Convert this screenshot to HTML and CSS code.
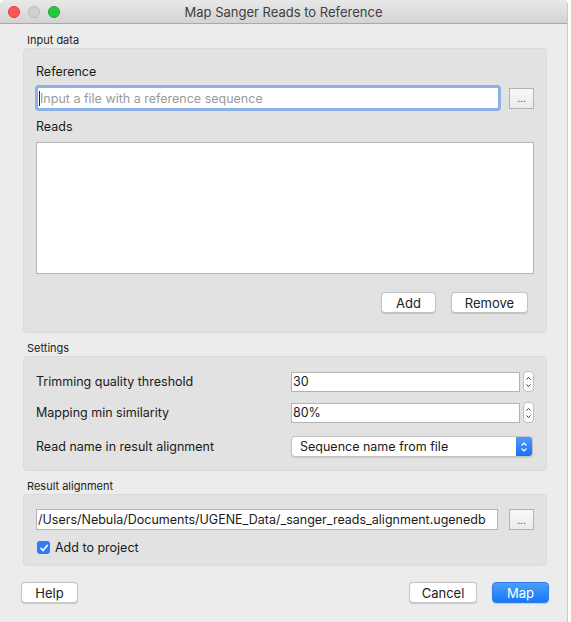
FILE: index.html
```html
<!DOCTYPE html>
<html>
<head>
<meta charset="utf-8">
<link rel="stylesheet" href="styles.css">
</head>
<body>
<div class="window">
  <div class="titlebar">
    <div class="lights">
      <span class="light red"></span>
      <span class="light gray"></span>
      <span class="light green"></span>
    </div>
    <div class="title">Map Sanger Reads to Reference</div>
  </div>
  <div class="content">
    <div class="section-label">Input data</div>
    <div class="group group-input">
      <div class="field-label">Reference</div>
      <div class="row">
        <div class="text-input focused"><span class="caret"></span><span class="placeholder">Input a file with a reference sequence</span></div>
        <div class="dots-btn">...</div>
      </div>
      <div class="field-label reads-label">Reads</div>
      <div class="list"></div>
      <div class="list-buttons">
        <div class="btn btn-add">Add</div>
        <div class="btn btn-remove">Remove</div>
      </div>
    </div>

    <div class="section-label">Settings</div>
    <div class="group group-settings">
      <div class="setting-row">
        <div class="setting-label">Trimming quality threshold</div>
        <div class="spin">
          <div class="spin-input">30</div>
          <div class="stepper"><svg width="11" height="20" viewBox="0 0 11 20"><path d="M3.5 7.5 L5.5 5.5 L7.5 7.5" fill="none" stroke="#333" stroke-width="1"/><path d="M3.5 12.5 L5.5 14.5 L7.5 12.5" fill="none" stroke="#333" stroke-width="1"/></svg></div>
        </div>
      </div>
      <div class="setting-row">
        <div class="setting-label">Mapping min similarity</div>
        <div class="spin">
          <div class="spin-input">80%</div>
          <div class="stepper"><svg width="11" height="20" viewBox="0 0 11 20"><path d="M3.5 7.5 L5.5 5.5 L7.5 7.5" fill="none" stroke="#333" stroke-width="1"/><path d="M3.5 12.5 L5.5 14.5 L7.5 12.5" fill="none" stroke="#333" stroke-width="1"/></svg></div>
        </div>
      </div>
      <div class="setting-row combo-row">
        <div class="setting-label">Read name in result alignment</div>
        <div class="combo">
          <div class="combo-text">Sequence name from file</div>
          <div class="combo-arrow"><svg width="16" height="20" viewBox="0 0 16 20"><path d="M5.5 8.5 L8 6 L10.5 8.5" fill="none" stroke="#fff" stroke-width="1.2"/><path d="M5.5 11.5 L8 14 L10.5 11.5" fill="none" stroke="#fff" stroke-width="1.2"/></svg></div>
        </div>
      </div>
    </div>

    <div class="section-label">Result alignment</div>
    <div class="group group-result">
      <div class="row">
        <div class="text-input path">/Users/Nebula/Documents/UGENE_Data/_sanger_reads_alignment.ugenedb</div>
        <div class="dots-btn small">...</div>
      </div>
      <div class="check-row">
        <span class="checkbox"><svg width="12" height="12" viewBox="0 0 12 12"><path d="M3 6.3 L5.1 8.6 L9.2 3.4" fill="none" stroke="#fff" stroke-width="1.6" stroke-linecap="round" stroke-linejoin="round"/></svg></span>
        <span>Add to project</span>
      </div>
    </div>

    <div class="footer">
      <div class="btn btn-help">Help</div>
      <div class="footer-right">
        <div class="btn btn-cancel">Cancel</div>
        <div class="btn btn-map">Map</div>
      </div>
    </div>
  </div>
</div>
</body>
</html>
```
FILE: styles.css
```css
html, body {
  margin: 0;
  padding: 0;
  background: #ffffff;
}
body {
  font-family: Inter, "Liberation Sans", sans-serif;
  font-size: 12.5px;
  color: #1a1a1a;
}
.window {
  width: 568px;
  height: 622px;
  background: #ececec;
  border-right: 1px solid #c8c8c8;
  border-radius: 5px 5px 0 0;
  box-sizing: border-box;
  overflow: hidden;
}
.titlebar {
  height: 23px;
  background: linear-gradient(#e8e8e8, #d3d3d3);
  border-bottom: 1px solid #a9a9a9;
  display: flex;
  align-items: center;
  position: relative;
}
.lights {
  display: flex;
  gap: 8px;
  padding-left: 8px;
}
.light {
  width: 12px;
  height: 12px;
  border-radius: 50%;
  box-sizing: border-box;
}
.light.red { background: #fc5753; border: 0.5px solid #df3d37; }
.light.gray { background: #d0d0d0; border: 0.5px solid #bcbcbc; }
.light.green { background: #28c840; border: 0.5px solid #1da631; }
.title {
  position: absolute;
  left: 0;
  right: 0;
  text-align: center;
  font-size: 13px;
  color: #404040;
  top: 4px;
}
.content {
  padding: 8px 20px 0 23px;
}
.section-label {
  font-size: 11px;
  padding-left: 4px;
  height: 16px;
  line-height: 16px;
  color: #222;
}
.group {
  background: #e2e2e2;
  border: 1px solid #dadada;
  border-radius: 4px;
  box-sizing: border-box;
  padding: 0 12px 0 12px;
}
.group-input {
  height: 285px;
  margin-bottom: 7px;
  padding-top: 14px;
}
.field-label {
  height: 18px;
  line-height: 18px;
}
.row {
  display: flex;
  align-items: center;
  gap: 10px;
}
.group-input .row {
  margin-top: 6px;
}
.text-input {
  flex: 1;
  height: 22px;
  background: #fff;
  box-sizing: border-box;
  border: 1px solid #b9b9b9;
  display: flex;
  align-items: center;
  padding-left: 2px;
  white-space: nowrap;
  overflow: hidden;
}
.text-input.focused {
  border: 1px solid #8db0e8;
  box-shadow: 0 0 0 2px #8db0e8;
  border-radius: 2px;
  margin-left: 1px;
  padding-left: 1px;
}
.caret {
  width: 1px;
  height: 15px;
  background: #222;
}
.placeholder {
  color: #9b9b9b;
}
.dots-btn {
  width: 25px;
  height: 21px;
  box-sizing: border-box;
  border: 1px solid #b2b2b2;
  background: linear-gradient(#f8f8f8, #ebebeb);
  font-size: 10px;
  display: flex;
  align-items: center;
  justify-content: center;
  color: #333;
  line-height: 1;
}
.reads-label {
  margin-top: 9px;
}
.list {
  margin-top: 6px;
  height: 132px;
  background: #fff;
  border: 1px solid #b4b4b4;
  box-sizing: border-box;
}
.list-buttons {
  display: flex;
  justify-content: flex-end;
  gap: 15px;
  margin-top: 18px;
  padding-right: 6px;
}
.btn {
  height: 21px;
  box-sizing: border-box;
  background: #fff;
  border: 1px solid #c4c4c4;
  border-radius: 4px;
  box-shadow: 0 0.5px 1px rgba(0,0,0,0.15);
  display: flex;
  align-items: center;
  justify-content: center;
  font-size: 13px;
  color: #222;
}
.btn-add { width: 55px; }
.btn-remove { width: 77px; }
.group-settings {
  height: 115px;
  padding-top: 14px;
  margin-bottom: 7px;
  padding-right: 12px;
}
.setting-row {
  display: flex;
  align-items: center;
  justify-content: space-between;
  height: 21px;
  margin-bottom: 10px;
}
.spin {
  display: flex;
  align-items: center;
  gap: 3px;
}
.spin-input {
  width: 229px;
  height: 20px;
  box-sizing: border-box;
  border: 1px solid #b4b4b4;
  background: #fff;
  padding-left: 1px;
  display: flex;
  align-items: center;
}
.stepper {
  width: 11px;
  height: 21px;
  box-sizing: border-box;
  background: #fff;
  border: 1px solid #c0c0c0;
  border-radius: 4px;
  display: flex;
  align-items: center;
  justify-content: center;
  overflow: hidden;
}
.stepper svg { flex: none; }
.combo-row {
  margin-top: 13px;
}
.combo {
  width: 242px;
  height: 21px;
  box-sizing: border-box;
  border: 1px solid #c4c4c4;
  border-radius: 4px;
  background: #fff;
  display: flex;
  overflow: hidden;
  box-shadow: 0 0.5px 1px rgba(0,0,0,0.12);
  margin-right: 1px;
}
.combo-text {
  flex: 1;
  padding-left: 8px;
  display: flex;
  align-items: center;
}
.combo-arrow {
  width: 16px;
  background: linear-gradient(#4d9cfb, #1a6ff2);
  display: flex;
  align-items: center;
  justify-content: center;
}
.group-result {
  height: 72px;
  padding-top: 14px;
}
.text-input.path {
  border-color: #b4b4b4;
  height: 21px;
  padding-left: 1px;
  margin-right: 1px;
}
.check-row {
  display: flex;
  align-items: center;
  gap: 5px;
  margin-top: 10px;
  padding-left: 1px;
}
.checkbox {
  width: 13px;
  height: 13px;
  border-radius: 3px;
  background: #2f7cf6;
  display: flex;
  align-items: center;
  justify-content: center;
}
.footer {
  display: flex;
  justify-content: space-between;
  margin-top: 16px;
  margin-left: -2px;
  margin-right: -2px;
}
.footer-right {
  display: flex;
  gap: 15px;
}
.btn-help { width: 57px; }
.btn-cancel { width: 68px; }
.btn-map {
  width: 57px;
  background: linear-gradient(#4ba0fb, #1877f3);
  border-color: #2a7cf0;
  color: #fff;
}
```
